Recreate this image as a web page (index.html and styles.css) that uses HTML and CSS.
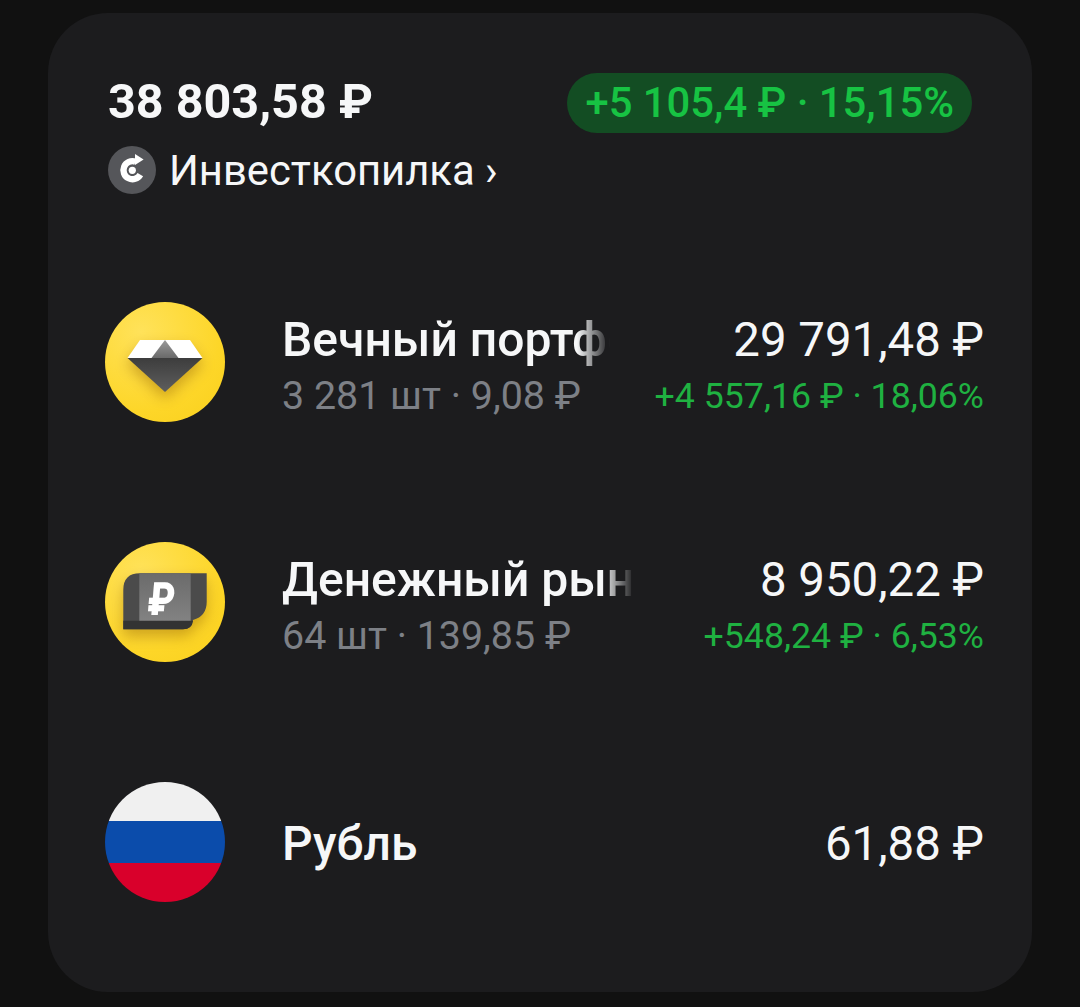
FILE: index.html
```html
<!DOCTYPE html>
<html lang="ru">
<head>
  <meta charset="UTF-8">
  <meta name="viewport" content="width=device-width, initial-scale=1.0">
  <title>Инвесткопилка</title>
  <link rel="stylesheet" href="styles.css">
</head>
<body>
  <div class="card">
    <header class="summary">
      <div class="summary-main">
        <div class="total">38 803,58 ₽</div>
        <div class="account">
          <span class="account-icon">
            <svg width="48" height="48" viewBox="0 0 48 48">
              <path d="M27.5 15.7 A9 9 0 1 0 32.3 28.6" fill="none" stroke="#fff" stroke-width="6.4"/>
              <path d="M27 8 L35.6 13.5 L27 19 Z" fill="#fff"/>
              <circle cx="24.3" cy="24.3" r="3.6" fill="#fff"/>
            </svg>
          </span>
          <span>Инвесткопилка ›</span>
        </div>
      </div>
      <div class="gain-pill">+5 105,4 ₽ · 15,15%</div>
    </header>

    <div class="assets">
      <div class="asset">
        <span class="asset-icon coin">
          <svg width="120" height="120" viewBox="0 0 120 120">
            <defs>
              <linearGradient id="gem-top" x1="0" y1="0" x2="0" y2="1">
                <stop offset="0" stop-color="#9a9a9a"/>
                <stop offset="1" stop-color="#6a6a6a"/>
              </linearGradient>
              <linearGradient id="gem-bottom" x1="0" y1="0" x2="0" y2="1">
                <stop offset="0" stop-color="#3d3d3d"/>
                <stop offset="1" stop-color="#5e5e5e"/>
              </linearGradient>
            </defs>
            <g class="icon-shadow">
              <path d="M35 38 H85 L97.5 56 H22.5 Z" fill="#fff"/>
              <path d="M60 38 L73.5 56 H46.5 Z" fill="url(#gem-top)"/>
              <path d="M22.5 56 H97.5 L60 90 Z" fill="url(#gem-bottom)"/>
            </g>
          </svg>
        </span>
        <div class="asset-info">
          <div class="asset-name name-fade-short">Вечный портфель</div>
          <div class="asset-sub">3 281 шт · 9,08 ₽</div>
        </div>
        <div class="asset-values">
          <div class="asset-amount">29 791,48 ₽</div>
          <div class="asset-gain">+4 557,16 ₽ · 18,06%</div>
        </div>
      </div>

      <div class="asset">
        <span class="asset-icon coin">
          <svg width="120" height="120" viewBox="0 0 120 120">
            <defs>
              <linearGradient id="note" x1="0" y1="0" x2="0" y2="1">
                <stop offset="0" stop-color="#6b6b6b"/>
                <stop offset="1" stop-color="#828282"/>
              </linearGradient>
            </defs>
            <g class="icon-shadow">
              <path d="M18.3 87.3 V48 Q18.3 31.3 35 31.3 H101.7 V60 Q101.7 74 88 78 Q87 87.3 78 87.3 Z" fill="#4b4b4b"/>
              <path d="M18.3 78.7 H88 Q87 87.3 78 87.3 H18.3 Z" fill="#333"/>
              <rect x="34.3" y="31.3" width="51.4" height="47.4" fill="url(#note)"/>
              <text class="rub-mark" x="56.5" y="73" text-anchor="middle">₽</text>
            </g>
          </svg>
        </span>
        <div class="asset-info">
          <div class="asset-name name-fade-long">Денежный рынок</div>
          <div class="asset-sub">64 шт · 139,85 ₽</div>
        </div>
        <div class="asset-values">
          <div class="asset-amount">8 950,22 ₽</div>
          <div class="asset-gain">+548,24 ₽ · 6,53%</div>
        </div>
      </div>

      <div class="asset asset-single">
        <span class="asset-icon flag">
          <span class="stripe white"></span>
          <span class="stripe blue"></span>
          <span class="stripe red"></span>
        </span>
        <div class="asset-info">
          <div class="asset-name">Рубль</div>
        </div>
        <div class="asset-values">
          <div class="asset-amount">61,88 ₽</div>
        </div>
      </div>
    </div>
  </div>
</body>
</html>
```

FILE: styles.css
```css
:root {
  --page: #111111;
  --card: #1c1c1e;
  --text: #f6f7f8;
  --muted: #7d8086;
  --green: #1fb141;
  --pill-green: #17c343;
}

* {
  margin: 0;
  padding: 0;
  box-sizing: border-box;
}

body {
  width: 1080px;
  height: 1007px;
  overflow: hidden;
  background-color: var(--page);
  color: var(--text);
  font-family: Roboto, "Liberation Sans", sans-serif;
  padding: 13px 48px 15px;
}

.card {
  height: 979px;
  background: var(--card);
  border-radius: 60px;
  padding: 60px 48px 0 57px;
}

.summary {
  display: flex;
  justify-content: space-between;
  align-items: flex-start;
  padding-left: 3px;
  padding-right: 12px;
}

.total {
  font-size: 48.5px;
  font-weight: 700;
  line-height: 56px;
  padding-top: 1px;
}

.account {
  display: flex;
  align-items: center;
  gap: 13px;
  margin-top: 15px;
  font-size: 41.8px;
  line-height: 48px;
}

.account-icon {
  width: 48px;
  height: 48px;
  border-radius: 50%;
  background: #55565a;
  display: flex;
}

.account span:last-child {
  padding-top: 2px;
}

.gain-pill {
  height: 60px;
  line-height: 60px;
  padding: 0 18px;
  border-radius: 30px;
  background: #134d23;
  color: var(--pill-green);
  font-size: 41.8px;
  font-weight: 500;
  white-space: nowrap;
}

.assets {
  margin-top: 107px;
  display: flex;
  flex-direction: column;
  gap: 120px;
}

.asset {
  display: flex;
  align-items: center;
  height: 120px;
}

.asset-icon {
  width: 120px;
  height: 120px;
  border-radius: 50%;
  flex-shrink: 0;
  overflow: hidden;
}

.coin {
  background: radial-gradient(circle at 30% 25%, #ffe25a, #fdd628 65%, #f9cf1c);
}

.icon-shadow {
  filter: drop-shadow(0 7px 7px rgba(150, 100, 0, 0.45));
}

.rub-mark {
  fill: #fff;
  font-size: 46px;
  font-weight: 900;
  transform-box: fill-box;
  transform-origin: center;
  transform: scaleX(0.82) skewX(-6deg);
}

.flag {
  display: flex;
  flex-direction: column;
}

.white { height: 39px; background: #f0f0f0; }
.blue { height: 42px; background: #0b4cab; }
.red { height: 39px; background: #d9002b; }

.asset-info {
  margin-left: 57px;
  width: 352px;
  flex-shrink: 0;
  padding-top: 5px;
}

.asset-name {
  font-size: 48px;
  font-weight: 500;
  line-height: 56px;
  white-space: nowrap;
  overflow: hidden;
}

/* long names get cut off with a fade at the right */
.name-fade-short {
  width: 328px;
  -webkit-mask-image: linear-gradient(to right, #000 295px, transparent 328px);
  mask-image: linear-gradient(to right, #000 295px, transparent 328px);
}

.name-fade-long {
  width: 352px;
  -webkit-mask-image: linear-gradient(to right, #000 320px, transparent 352px);
  mask-image: linear-gradient(to right, #000 320px, transparent 352px);
}

.asset-sub {
  font-size: 39.4px;
  line-height: 44px;
  margin-top: 6px;
  color: var(--muted);
  white-space: nowrap;
}

.asset-values {
  margin-left: auto;
  text-align: right;
  white-space: nowrap;
  padding-top: 5px;
}

.asset-single .asset-info,
.asset-single .asset-values {
  padding-top: 4px;
}

.asset-amount {
  font-size: 47.4px;
  line-height: 56px;
}

.asset-gain {
  font-size: 35.7px;
  line-height: 44px;
  margin-top: 6px;
  color: var(--green);
}
```
